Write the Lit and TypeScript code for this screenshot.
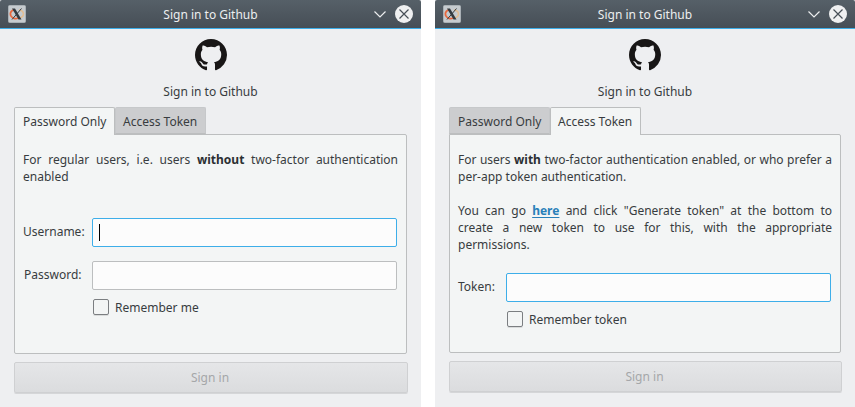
import { LitElement, html, css } from "lit";
import { customElement, property } from "lit/decorators.js";

@customElement("sign-in-window")
class SignInWindow extends LitElement {
  @property() mode: "password" | "token" = "password";

  static styles = css`
    :host { display: block; }
    * { box-sizing: border-box; }
    .window {
      height: 407px; background: #eeeff1; color: #383c40;
      font: 12px/17px "Noto Sans", sans-serif; display: flex; flex-direction: column;
    }
    .bar {
      height: 29px; flex: none; display: flex; align-items: center; padding: 0 8px;
      background: linear-gradient(#566068, #464e56); border-bottom: 1px solid #3daee9;
      border-radius: 2px 2px 0 0; color: #eceeef;
    }
    .bar svg { flex: none; display: block; }
    .title { flex: 1; text-align: center; padding-left: 23px; }
    .chevron { margin-right: 7px; }
    .head { display: flex; flex-direction: column; align-items: center; padding-top: 10px; height: 78px; flex: none; }
    .head svg { display: block; margin-bottom: 12px; }
    .tabs { display: flex; height: 28px; flex: none; margin: 0 14px -1px; position: relative; }
    .tab {
      height: 27px; line-height: 28px; padding-left: 8px; width: 91px;
      background: #cccdcf; border: 1px solid #c6c8ca; border-bottom-color: #bcbebf; border-radius: 2px 2px 0 0;
      white-space: nowrap;
    }
    .tab:last-child { padding-left: 7px; }
    .tab.wide { width: 101px; }
    .tab.active { height: 28px; background: #f3f5f5; border: 1px solid #bcbebf; border-bottom: 0; }
    .panel {
      margin: 0 14px; height: 220px; flex: none; background: #f3f5f5; border: 1px solid #bcbebf;
      border-radius: 0 2px 2px 2px; padding: 16px 8px 0;
    }
    .token .panel { height: 219px; }
    p { margin: 0 0 17px; text-align: justify; }
    b { color: #2b2f33; }
    a { color: #2980b9; font-weight: bold; text-decoration: underline; text-underline-offset: 2px; }
    .form { display: grid; grid-template-columns: 69px 1fr; row-gap: 14px; align-items: center; margin: 33px 1px 0 0; }
    .token .form { grid-template-columns: 48px 1fr; margin-top: 20px; }
    .label { padding-bottom: 2px; white-space: nowrap; }
    .label.short { padding-left: 1px; }
    .field { height: 29px; background: #fcfcfc; border: 1px solid #bcbebf; border-radius: 2px; padding: 5px 6px; display: flex; }
    .field.focus { border-color: #3daee9; }
    .caret { width: 1px; height: 17px; background: #000; }
    .remember { display: flex; align-items: flex-start; gap: 6px; height: 17px; margin: 9px 0 0 70px; }
    .token .remember { margin-left: 49px; }
    .remember .t { line-height: 17px; }
    .box { width: 16px; height: 16px; border: 1px solid #7b7e81; border-radius: 2px; box-shadow: 0 1px 0 #d9dbdb; }
    .submit {
      margin: 8px 13px 0 14px; height: 31px; line-height: 30px; text-align: center; color: #a5a7a9; padding-right: 2px;
      background: linear-gradient(#e5e6e8, #dbdcde); border: 1px solid #cfd0d2; border-radius: 2px;
      box-shadow: 0 1px 0 #d5d6d8;
    }
  `;

  private form() {
    if (this.mode === "token") {
      return html`
        <p>For users <b>with</b> two-factor authentication enabled, or who prefer a per-app token authentication.</p>
        <p>You can go <a>here</a> and click "Generate token" at the bottom to create a new token to use for this, with the appropriate permissions.</p>
        <div class="form"><span class="label">Token:</span><div class="field focus"></div></div>
        <div class="remember"><span class="box"></span><span class="t">Remember token</span></div>`;
    }
    return html`
      <p>For regular users, i.e. users <b>without</b> two-factor authentication enabled</p>
      <div class="form">
        <span class="label">Username:</span><div class="field focus"><i class="caret"></i></div>
        <span class="label short">Password:</span><div class="field"></div>
      </div>
      <div class="remember"><span class="box"></span><span class="t">Remember me</span></div>`;
  }

  render() {
    const token = this.mode === "token";
    return html`<div class="window ${token ? "token" : ""}">
      <div class="bar">
        <svg width="18" height="18" viewBox="0 0 18 18">
          <rect x=".5" y=".5" width="17" height="17" rx="1" fill="#c6cbcf" stroke="#a9b0b5"/>
          <path d="M6 5C1.500 6 1 11 5.500 13.200C7 13.900 9 13.600 10 13" fill="none" stroke="#e8673c" stroke-width="1.700"/>
          <path d="M11 5C17 6 16.500 11.500 12 13" fill="none" stroke="#e3bd91" stroke-width="1.500"/>
          <path d="M4 3.500H7L13.500 14.500H10.500Z" fill="#343a3f"/>
          <path d="M13.500 3.500L4 14.500" stroke="#343a3f" stroke-width="1"/>
        </svg>
        <span class="title">Sign in to Github</span>
        <svg class="chevron" width="16" height="16" viewBox="0 0 16 16"><path d="M2.500 5.500L8 11L13.500 5.500" fill="none" stroke="#eceeef" stroke-width="1.200"/></svg>
        <svg width="18" height="18" viewBox="0 0 18 18"><circle cx="9" cy="9" r="9" fill="#eff0f1"/><path d="M4.500 4.500L13.500 13.500M13.500 4.500L4.500 13.500" stroke="#474f57" stroke-width="1.200"/></svg>
      </div>
      <div class="head">
        <svg width="32" height="32" viewBox="0 0 16 16"><path fill="#181616" d="M8 0C3.580 0 0 3.580 0 8c0 3.540 2.290 6.530 5.470 7.590.4.070.55-.17.55-.38 0-.19-.01-.82-.01-1.490-2.010.37-2.530-.49-2.690-.94-.09-.23-.48-.94-.82-1.130-.28-.15-.68-.52-.01-.53.63-.01 1.080.58 1.230.82.72 1.210 1.870.87 2.330.66.07-.52.28-.87.51-1.070-1.780-.2-3.640-.89-3.640-3.950 0-.87.31-1.590.82-2.150-.08-.2-.36-1.020.08-2.120 0 0 .67-.21 2.200.82.64-.18 1.320-.27 2-.27.68 0 1.360.09 2 .27 1.530-1.040 2.200-.82 2.200-.82.44 1.100.16 1.920.08 2.120.51.56.82 1.270.82 2.150 0 3.070-1.870 3.750-3.650 3.950.29.25.54.73.54 1.480 0 1.070-.01 1.930-.01 2.200 0 .21.15.46.55.38A8.013 8.013 0 0 0 16 8c0-4.420-3.580-8-8-8z"/></svg>
        <span>Sign in to Github</span>
      </div>
      <div class="tabs">
        <div class="tab wide ${token ? "" : "active"}">Password Only</div>
        <div class="tab ${token ? "active" : ""}">Access Token</div>
      </div>
      <div class="panel">${this.form()}</div>
      <div class="submit">Sign in</div>
    </div>`;
  }
}

@customElement("app-root")
class AppRoot extends LitElement {
  static styles = css`
    :host { display: grid; grid-template-columns: 421px 420px; column-gap: 14px; height: 407px; background: #fff; overflow: hidden; }
  `;
  render() {
    return html`<sign-in-window mode="password"></sign-in-window><sign-in-window mode="token"></sign-in-window>`;
  }
}
